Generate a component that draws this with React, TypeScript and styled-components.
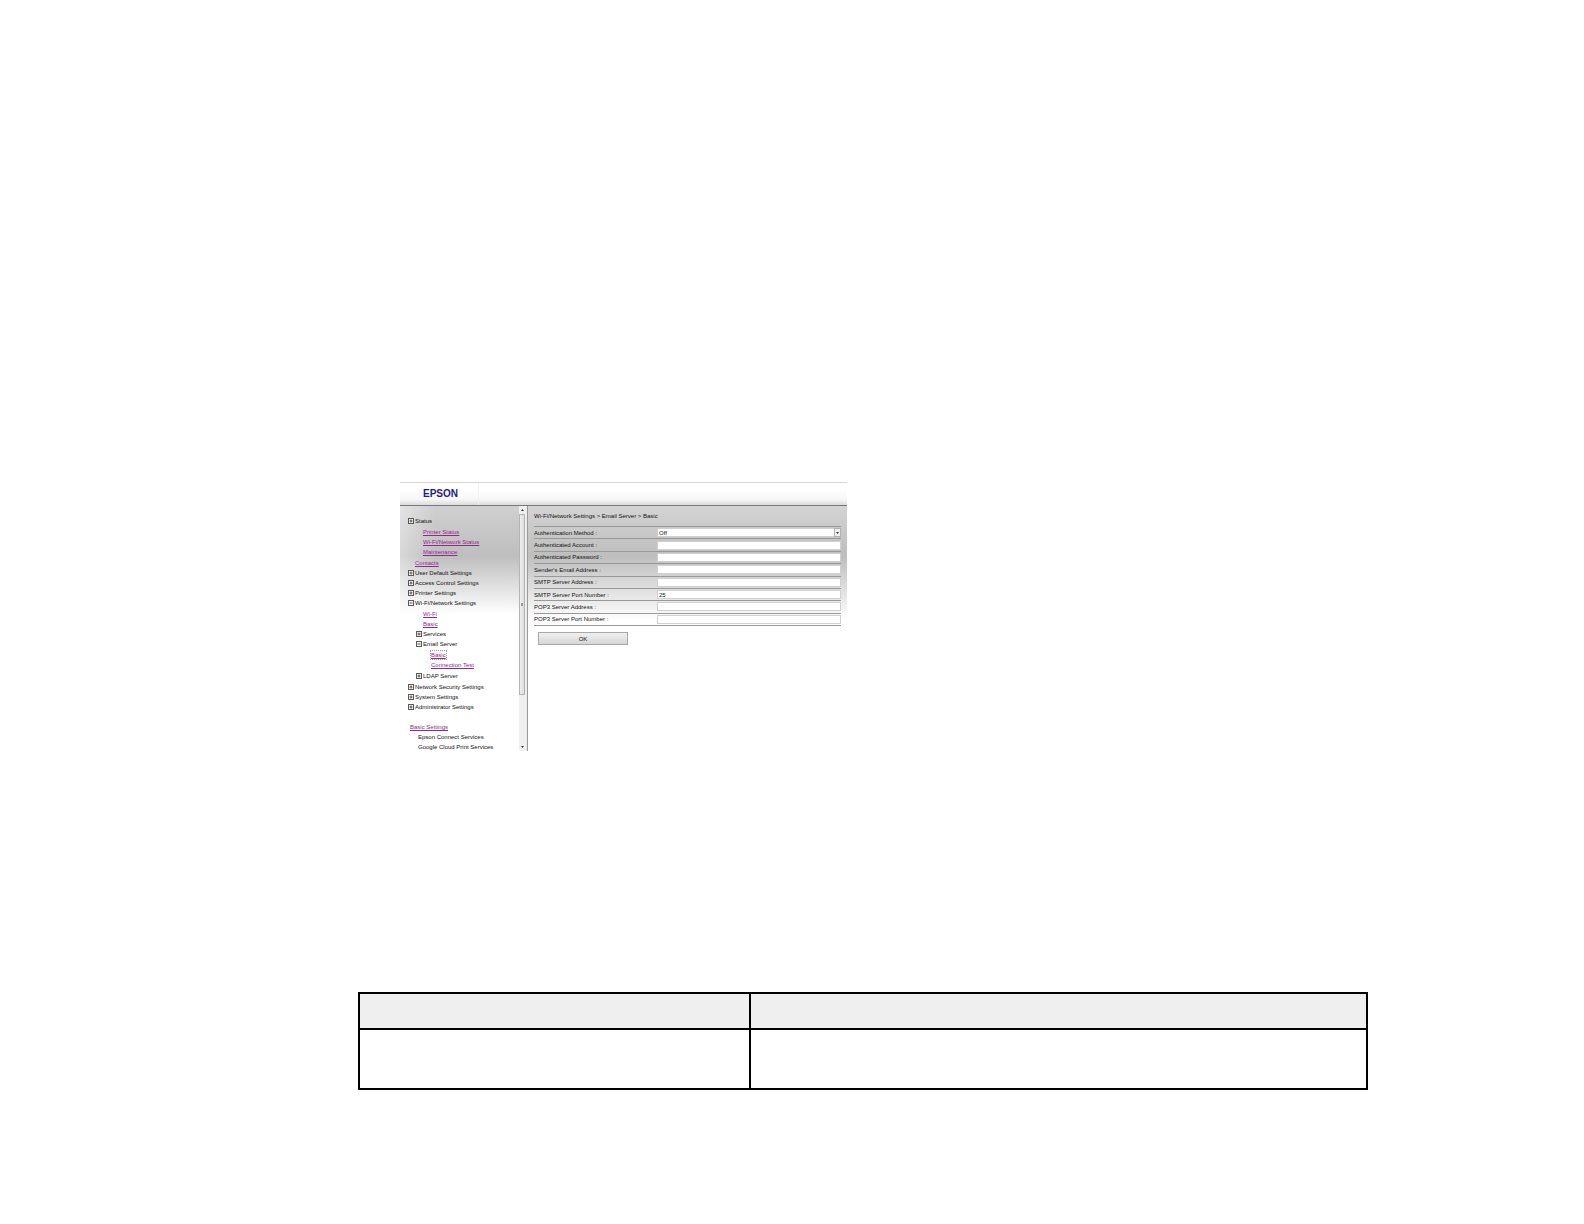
import React from "react";
import styled, { createGlobalStyle, css } from "styled-components";

const GlobalStyle = createGlobalStyle`
  *, *::before, *::after { box-sizing: border-box; }
  body {
    margin: 0;
    background: #fff;
    color: #111;
    font-family: "Liberation Sans", Arial, sans-serif;
  }
`;

const Page = styled.main`
  display: flex;
  flex-direction: column;
  gap: 241px;
  padding: 482px 216px 134px 358px;
`;

const Console = styled.section`
  width: 50%;
  max-width: 447px;
  margin-left: 42px;
  font-size: 6px;
  line-height: 10px;
`;

const Header = styled.header`
  display: flex;
  height: 24px;
  padding-left: 23px;
  border-top: 1px solid #d8d8d8;
  border-bottom: 1px solid #777;
  background: linear-gradient(#fff 30%, #f6f6f6 75%, #dcdcdc);
`;

const Brand = styled.span`
  width: 56px;
  border-right: 1px solid #f2f2f2;
  color: #1c1c86;
  font-size: 10px;
  font-weight: 700;
  line-height: 22px;
`;

const Body = styled.div`
  display: grid;
  grid-template-columns: 119px 8px 1fr;
  height: 245px;
`;

const fade = css`
  background: linear-gradient(#d4d4d4, #bebebe 50px, #fff 115px);
`;

const Sidebar = styled.nav`
  background:
    linear-gradient(90deg, rgba(255, 255, 255, 0.4), rgba(255, 255, 255, 0) 30%),
    linear-gradient(#d0d0d0, #bebebe 50px, #fff 108px);
  overflow: hidden;
  padding: 10px 0 0 8px;
`;

const Branch = styled.ul<{ $nested?: boolean }>`
  margin: 0;
  padding: ${(p) => (p.$nested ? "1px 0 1px 8px" : "0")};
  list-style: none;
`;

const Row = styled.div<{ $indent?: boolean }>`
  display: flex;
  align-items: center;
  gap: 1px;
  height: 10px;
  padding-left: ${(p) => (p.$indent ? "7px" : "0")};
  white-space: nowrap;
`;

const Toggle = styled.button`
  display: flex;
  padding: 0;
  border: 0;
  background: none;
  color: #333;
`;

const NavLink = styled.a<{ $current?: boolean }>`
  color: #93278f;
  line-height: 8px;
  outline: ${(p) => (p.$current ? "1px dotted #b58ab8" : "none")};
`;

const Shortcuts = styled.div`
  padding: 10px 0 0 2px;
`;

const ShortcutItem = styled.div`
  padding-left: 8px;
  white-space: nowrap;
`;

const Scrollbar = styled.div`
  display: flex;
  flex-direction: column;
  align-items: center;
  padding-right: 1px;
  border-right: 1px solid #ececec;
  background: #f0f0f0;
`;

const ScrollButton = styled.button`
  display: flex;
  justify-content: center;
  width: 100%;
  padding: 3px 0;
  border: 0;
  background: #f0f0f0;
`;

const Thumb = styled.div`
  display: flex;
  align-items: center;
  justify-content: center;
  width: 100%;
  height: 181px;
  margin-bottom: auto;
  border: 1px solid #b4b4b4;
  background: linear-gradient(90deg, #f0f0f0, #dcdcdc);
`;

const Grip = styled.span`
  width: 2px;
  height: 3px;
  background: #999;
`;

const Content = styled.div`
  ${fade}
  padding: 5px 6px 0 6px;
  border-left: 1px solid #999;
`;

const Crumbs = styled.div`
  padding-bottom: 5px;
`;

const Fields = styled.div`
  display: grid;
  grid-auto-rows: 1fr;
  height: 100px;
  border-bottom: 1px solid #999;
`;

const Field = styled.div`
  display: grid;
  grid-template-columns: 123px 1fr;
  align-items: center;
  border-top: 1px solid #999;
`;

const control = css`
  width: 100%;
  height: 9px;
  margin: 0;
  padding: 0 1px;
  border: 1px solid #d0d0d0;
  border-radius: 0;
  background: #fff;
  color: #111;
  font: 6px "Liberation Sans", Arial, sans-serif;
`;

const TextBox = styled.input`
  ${control}
`;

const SelectWrap = styled.div`
  display: flex;
  position: relative;
`;

const Select = styled.select`
  ${control}
  appearance: none;
`;

const SelectArrow = styled.span`
  display: flex;
  position: absolute;
  top: 0;
  right: 0;
  bottom: 0;
  align-items: center;
  justify-content: center;
  width: 7px;
  border: 1px solid #b0b0b0;
  background: #f0f0f0;
  pointer-events: none;
`;

const OkButton = styled.button`
  display: block;
  width: 90px;
  height: 13px;
  margin: 6px 0 0 4px;
  padding: 0;
  border: 1px solid #a8a8a8;
  background: linear-gradient(#f0f0f0, #d6d6d6);
  color: #111;
  font: 6px "Liberation Sans", Arial, sans-serif;
`;

const Settings = styled.table`
  width: 100%;
  border-collapse: collapse;
  table-layout: fixed;
`;

const HeadCell = styled.th<{ $share?: string }>`
  width: ${(p) => p.$share ?? "auto"};
  height: 36px;
  padding: 0;
  border: 2px solid #000;
  background: #efefef;
`;

const Cell = styled.td`
  height: 60px;
  padding: 0;
  border: 2px solid #000;
`;

type Node = { label: string; link?: boolean; current?: boolean; children?: Node[]; open?: boolean };

const tree: Node[] = [
  {
    label: "Status",
    children: [
      { label: "Printer Status", link: true },
      { label: "Wi-Fi/Network Status", link: true },
      { label: "Maintenance", link: true },
    ],
  },
  { label: "Contacts", link: true },
  { label: "User Default Settings" },
  { label: "Access Control Settings" },
  { label: "Printer Settings" },
  {
    label: "Wi-Fi/Network Settings",
    open: true,
    children: [
      { label: "Wi-Fi", link: true },
      { label: "Basic", link: true },
      { label: "Services" },
      {
        label: "Email Server",
        open: true,
        children: [
          { label: "Basic", link: true, current: true },
          { label: "Connection Test", link: true },
        ],
      },
      { label: "LDAP Server" },
    ],
  },
  { label: "Network Security Settings" },
  { label: "System Settings" },
  { label: "Administrator Settings" },
];

const fields = [
  { id: "account", label: "Authenticated Account :" },
  { id: "password", label: "Authenticated Password :" },
  { id: "sender", label: "Sender's Email Address :" },
  { id: "smtp", label: "SMTP Server Address :" },
  { id: "smtp-port", label: "SMTP Server Port Number :", value: "25" },
  { id: "pop", label: "POP3 Server Address :" },
  { id: "pop-port", label: "POP3 Server Port Number :" },
];

function BoxIcon({ open }: { open?: boolean }) {
  return (
    <svg width="6" height="6" viewBox="0 0 6 6" fill="#f4f4f4" stroke="currentColor">
      <rect x="0.5" y="0.5" width="5" height="5" strokeOpacity="0.8" />
      <path d={open ? "M1.5 3h3" : "M1.5 3h3M3 1.5v3"} strokeWidth="0.8" />
    </svg>
  );
}

function Arrow({ up }: { up?: boolean }) {
  return (
    <svg width="3" height="2" viewBox="0 0 3 2" fill="#333">
      <path d={up ? "M0 2L1.5 0L3 2z" : "M0 0h3L1.5 2z"} />
    </svg>
  );
}

function Tree({ nodes, nested }: { nodes: Node[]; nested?: boolean }) {
  return (
    <Branch $nested={nested}>
      {nodes.map((n) => (
        <li key={n.label}>
          <Row $indent={n.link}>
            {n.link ? (
              <NavLink href="#" $current={n.current}>{n.label}</NavLink>
            ) : (
              <>
                <Toggle type="button" aria-label={n.label}><BoxIcon open={n.open} /></Toggle>
                {n.label}
              </>
            )}
          </Row>
          {n.children && <Tree nodes={n.children} nested />}
        </li>
      ))}
    </Branch>
  );
}

export default function App() {
  return (
    <>
      <GlobalStyle />
      <Page>
        <Console>
          <Header><Brand>EPSON</Brand></Header>
          <Body>
            <Sidebar>
              <Tree nodes={tree} />
              <Shortcuts>
                <NavLink href="#">Basic Settings</NavLink>
                <ShortcutItem>Epson Connect Services</ShortcutItem>
                <ShortcutItem>Google Cloud Print Services</ShortcutItem>
              </Shortcuts>
            </Sidebar>
            <Scrollbar>
              <ScrollButton type="button" aria-label="Scroll up"><Arrow up /></ScrollButton>
              <Thumb><Grip /></Thumb>
              <ScrollButton type="button" aria-label="Scroll down"><Arrow /></ScrollButton>
            </Scrollbar>
            <Content>
              <Crumbs>Wi-Fi/Network Settings &gt; Email Server &gt; Basic</Crumbs>
              <Fields>
                <Field>
                  <label htmlFor="method">Authentication Method :</label>
                  <SelectWrap>
                    <Select id="method"><option>Off</option></Select>
                    <SelectArrow><Arrow /></SelectArrow>
                  </SelectWrap>
                </Field>
                {fields.map((f) => (
                  <Field key={f.id}>
                    <label htmlFor={f.id}>{f.label}</label>
                    <TextBox id={f.id} defaultValue={f.value} />
                  </Field>
                ))}
              </Fields>
              <OkButton type="button">OK</OkButton>
            </Content>
          </Body>
        </Console>
        <Settings>
          <thead>
            <tr>
              <HeadCell $share="38.8%" />
              <HeadCell />
            </tr>
          </thead>
          <tbody>
            <tr>
              <Cell />
              <Cell />
            </tr>
          </tbody>
        </Settings>
      </Page>
    </>
  );
}
